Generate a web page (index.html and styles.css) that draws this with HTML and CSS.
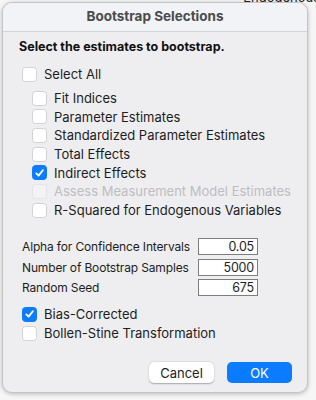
FILE: index.html
```html
<!DOCTYPE html>
<html lang="en">
<head>
<meta charset="UTF-8">
<meta name="viewport" content="width=device-width, initial-scale=1.0">
<title>Bootstrap Selections</title>
<link rel="stylesheet" href="styles.css">
</head>
<body>
<div class="backdrop">Endogenous</div>
<div class="dialog">
  <div class="titlebar">Bootstrap Selections</div>
  <div class="content">
    <p class="heading">Select the estimates to bootstrap.</p>

    <label class="check top"><span class="box"></span>Select All</label>
    <div class="group">
      <label class="check"><span class="box"></span>Fit Indices</label>
      <label class="check"><span class="box"></span>Parameter Estimates</label>
      <label class="check"><span class="box"></span>Standardized Parameter Estimates</label>
      <label class="check"><span class="box"></span>Total Effects</label>
      <label class="check"><span class="box on"><svg viewBox="0 0 14 14" width="14" height="14"><path d="M3.6 7.4 L6 9.8 L10.6 4" fill="none" stroke="#fff" stroke-width="2" stroke-linecap="round" stroke-linejoin="round"/></svg></span>Indirect Effects</label>
      <label class="check disabled"><span class="box"></span>Assess Measurement Model Estimates</label>
      <label class="check"><span class="box"></span>R-Squared for Endogenous Variables</label>
    </div>

    <div class="fields">
      <div class="field"><span>Alpha for Confidence Intervals</span><input type="text" value="0.05"></div>
      <div class="field"><span>Number of Bootstrap Samples</span><input type="text" value="5000"></div>
      <div class="field"><span>Random Seed</span><input type="text" value="675"></div>
    </div>

    <label class="check top"><span class="box on"><svg viewBox="0 0 14 14" width="14" height="14"><path d="M3.6 7.4 L6 9.8 L10.6 4" fill="none" stroke="#fff" stroke-width="2" stroke-linecap="round" stroke-linejoin="round"/></svg></span>Bias-Corrected</label>
    <label class="check top"><span class="box"></span>Bollen-Stine Transformation</label>

    <div class="buttons">
      <button type="button" class="cancel">Cancel</button>
      <button type="button" class="ok">OK</button>
    </div>
  </div>
</div>
</body>
</html>
```

FILE: styles.css
```css
body {
  margin: 0;
  padding: 2px;
  background-color: #f6f6f6;
  font-family: Inter, "Liberation Sans", sans-serif;
  font-size: 13px;
  color: #1d1d1d;
  position: relative;
  height: 400px;
  box-sizing: border-box;
  overflow: hidden;
}

.backdrop {
  position: absolute;
  top: -11px;
  right: -4px;
  font-size: 13px;
  color: #222;
}

.dialog {
  position: relative;
  width: 306px;
  height: 391px;
  background-color: #eeeef0;
  border: 1px solid #c4c4c6;
  border-radius: 10px;
  box-sizing: border-box;
  box-shadow: 0 1px 4px rgba(0, 0, 0, 0.25);
  overflow: hidden;
}

.titlebar {
  height: 28px;
  line-height: 27px;
  text-align: center;
  font-weight: bold;
  font-size: 13.5px;
  color: #4b4b4b;
  background-color: #f1f3f6;
  border-bottom: 1px solid #d3d3d5;
}

.content {
  padding: 7px 0 0 16px;
}

.heading {
  margin: 0 0 10px 0;
  font-weight: bold;
  font-size: 12.5px;
  line-height: 16px;
  color: #111;
}

.check {
  display: flex;
  align-items: center;
  height: 18.7px;
  gap: 7px;
  padding-left: 3px;
}

.group {
  padding: 5px 0 0 10px;
}

.box {
  width: 13px;
  height: 13px;
  border: 1px solid #d2d2d4;
  border-radius: 3.5px;
  background-color: #fff;
  flex: none;
  display: flex;
  align-items: center;
  justify-content: center;
}

.box.on {
  background-color: #0b7cff;
  border-color: #0b7cff;
}

.box svg {
  display: block;
}

.disabled {
  color: #bdbdbf;
}

.disabled .box {
  background-color: #f3f3f4;
  border-color: #e4e4e6;
}

.fields {
  padding: 18px 0 6px 3px;
  font-size: 12px;
  letter-spacing: -0.15px;
}

.field {
  display: flex;
  align-items: center;
  justify-content: space-between;
  width: 236px;
  height: 18.5px;
  margin-bottom: 2px;
  white-space: nowrap;
}

.field input {
  width: 60px;
  height: 17px;
  box-sizing: border-box;
  border: 1px solid #7d7d7d;
  background-color: #fff;
  text-align: right;
  font-family: inherit;
  font-size: 12.5px;
  letter-spacing: -0.2px;
  padding: 0 3px;
  color: #1d1d1d;
  flex: none;
}

.buttons {
  display: flex;
  justify-content: flex-end;
  gap: 13px;
  padding: 20px 15px 0 0;
}

button {
  width: 65px;
  height: 21px;
  border: none;
  border-radius: 5px;
  font-family: inherit;
  font-size: 13px;
}

.cancel {
  background-color: #fff;
  color: #1d1d1d;
  box-shadow: 0 0.5px 1.5px rgba(0, 0, 0, 0.3);
}

.ok {
  background-color: #0b7cff;
  color: #fff;
}
```
